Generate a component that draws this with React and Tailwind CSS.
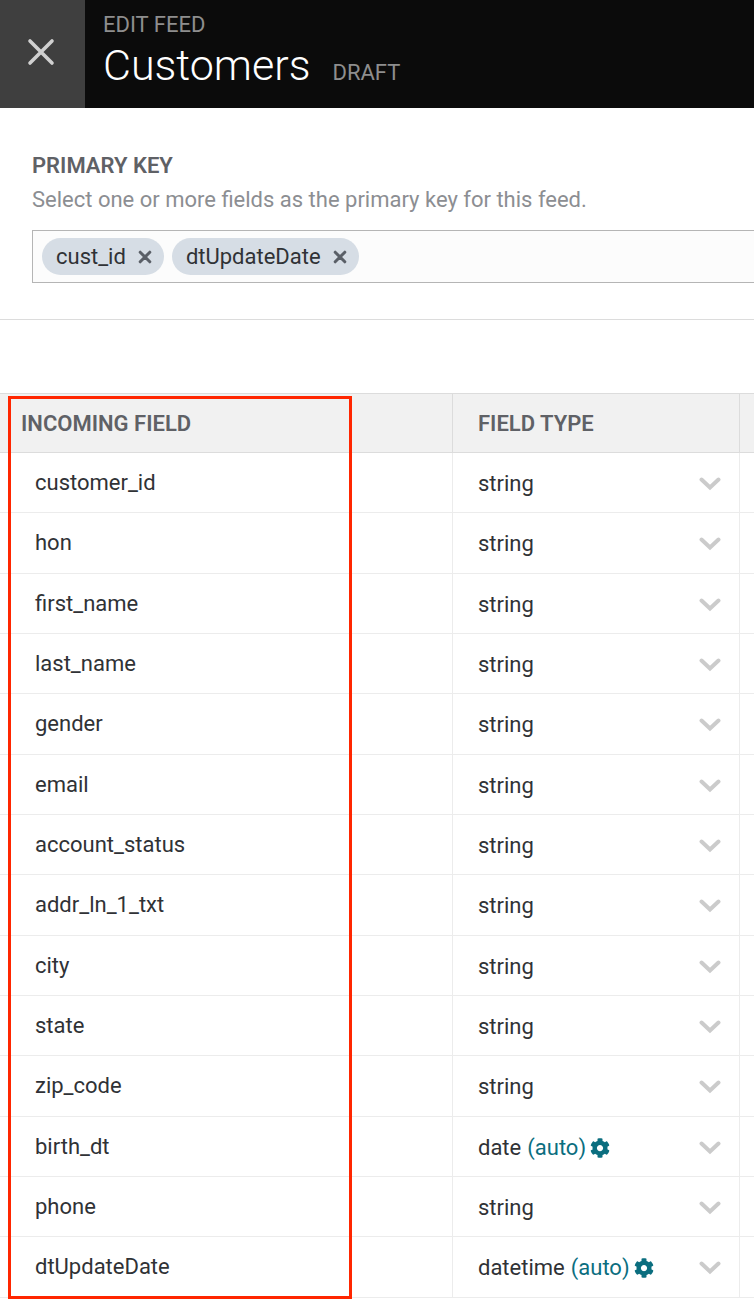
import { useState } from "react";
import { FaCog } from "react-icons/fa";

const fieldTypes = ["string", "date", "datetime"];

const incomingFields = [
  { name: "customer_id", type: "string" },
  { name: "hon", type: "string" },
  { name: "first_name", type: "string" },
  { name: "last_name", type: "string" },
  { name: "gender", type: "string" },
  { name: "email", type: "string" },
  { name: "account_status", type: "string" },
  { name: "addr_ln_1_txt", type: "string" },
  { name: "city", type: "string" },
  { name: "state", type: "string" },
  { name: "zip_code", type: "string" },
  { name: "birth_dt", type: "date", auto: true },
  { name: "phone", type: "string" },
  { name: "dtUpdateDate", type: "datetime", auto: true },
];

function Header() {
  return (
    <header className="flex h-[108px] bg-[#0b0b0b]">
      <button
        type="button"
        aria-label="Close"
        className="flex w-[85px] shrink-0 items-center justify-center bg-[#3f3f3f] pr-1 pb-1"
      >
        <svg viewBox="0 0 28 28" className="size-7" fill="none" stroke="#d0d0d0" strokeWidth="3.6" strokeLinecap="round">
          <path d="M3 3l22 22M25 3l-22 22" />
        </svg>
      </button>
      <div className="flex flex-col pt-[13px] pl-[18px]">
        <p className="leading-6 text-[#8e8e8e]">EDIT FEED</p>
        <div className="flex items-baseline gap-[22px]">
          <h1 className="text-[43px] leading-14 font-light text-white">Customers</h1>
          <span className="leading-6 text-[#8e8e8e]">DRAFT</span>
        </div>
      </div>
    </header>
  );
}

function PrimaryKey() {
  const [keys, setKeys] = useState(["cust_id", "dtUpdateDate"]);

  return (
    <section className="border-b border-[#dcdcdc] pt-11 pb-9 pl-8">
      <h2 className="leading-7 font-semibold text-[#5f6166]">
        <label htmlFor="primary-key">PRIMARY KEY</label>
      </h2>
      <p className="mt-1.5 leading-7 text-[#8c8e92]">
        Select one or more fields as the primary key for this feed.
      </p>
      <div className="mt-4 flex items-center gap-2 border border-r-0 border-[#b5b5b5] bg-[#fcfcfc] py-[7px] pl-[9px]">
        {keys.map((key) => (
          <span
            key={key}
            className="flex h-[37px] items-center gap-3 rounded-full bg-[#d6dde5] pr-3 pl-3.5 text-[#303236]"
          >
            {key}
            <button
              type="button"
              aria-label={`Remove ${key}`}
              onClick={() => setKeys(keys.filter((k) => k !== key))}
            >
              <svg
                viewBox="0 0 14 14"
                className="size-3.5"
                fill="none"
                stroke="#5a5f67"
                strokeWidth="3"
                strokeLinecap="round"
              >
                <path d="M2.2 2.2l9.6 9.6M11.8 2.2l-9.6 9.6" />
              </svg>
            </button>
          </span>
        ))}
        <input id="primary-key" type="text" className="min-w-0 flex-1 bg-transparent outline-none" />
      </div>
    </section>
  );
}

function TypeCell({ field }) {
  const [type, setType] = useState(field.type);

  return (
    <div className="relative flex items-center pt-0.5 pr-[18px] pl-[25px]">
      <select
        aria-label={`Field type of ${field.name}`}
        value={type}
        onChange={(e) => setType(e.target.value)}
        className={`field-sizing-content appearance-none bg-transparent leading-7 ${
          field.auto ? "" : "flex-1"
        }`}
      >
        {fieldTypes.map((t) => (
          <option key={t}>{t}</option>
        ))}
      </select>
      {field.auto && (
        <button type="button" className="ml-1.5 flex items-center gap-1 leading-7 text-[#0b6e7f]">
          (auto)
          <FaCog className="size-5" />
        </button>
      )}
      {/* sits on top of the select, clicks go through */}
      <svg
        viewBox="0 0 22 14"
        className="pointer-events-none absolute right-[18px] h-3.5 w-[22px]"
        fill="none"
        stroke="#cbcbcb"
        strokeWidth="4"
        strokeLinecap="round"
      >
        <path d="M2.5 2.5L11 10.5L19.5 2.5" />
      </svg>
    </div>
  );
}

function FieldTable() {
  return (
    <section className="relative mt-[73px]">
      <table className="w-full table-fixed border-separate border-spacing-0 text-left">
        <thead>
          <tr className="h-[60px] bg-[#f1f1f1] text-[#5f6166]">
            <th className="w-[453px] border-y border-r border-[#dcdcdc] p-0 pt-0.5 pl-[21px] font-semibold">
              INCOMING FIELD
            </th>
            <th className="w-[287px] border-y border-r border-[#dcdcdc] p-0 pt-0.5 pl-[25px] font-semibold">
              FIELD TYPE
            </th>
            <td className="border-y border-[#dcdcdc] p-0"></td>
          </tr>
        </thead>
        <tbody>
          {incomingFields.map((field, index) => (
            <tr key={field.name} className={index % 3 === 1 ? "h-[61px]" : "h-[60px]"}>
              <td className="border-r border-b border-[#ececec] p-0 pl-[35px]">{field.name}</td>
              <td className="border-r border-b border-[#ececec] p-0">
                <TypeCell field={field} />
              </td>
              <td className="border-b border-[#ececec] p-0"></td>
            </tr>
          ))}
        </tbody>
      </table>
      {/* highlight around the incoming fields */}
      <div className="pointer-events-none absolute top-[3px] -bottom-px left-2 w-[344px] border-3 border-[#ff2600]"></div>
    </section>
  );
}

function App() {
  return (
    <main className="min-h-screen bg-white font-[Roboto,sans-serif] text-[22px] leading-7 text-[#303236]">
      <Header />
      <PrimaryKey />
      <FieldTable />
    </main>
  );
}

export default App;
